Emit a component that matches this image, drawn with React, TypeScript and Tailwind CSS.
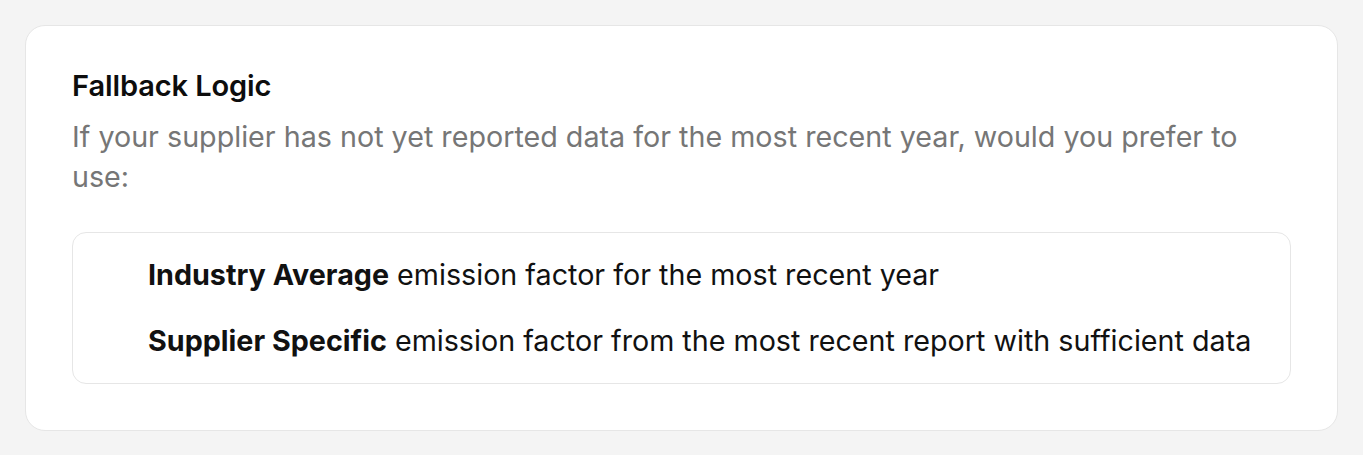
import React from "react";

const options = [
  { id: "industry", label: "Industry Average", rest: "emission factor for the most recent year" },
  { id: "supplier", label: "Supplier Specific", rest: "emission factor from the most recent report with sufficient data" },
];

const FallbackLogic = () => {
  return (
    <div className="rounded-[20px] border border-[#e6e6e6] bg-white px-[46px] pt-[42px] pb-[46px]">
      <h2 className="text-[29px] font-semibold leading-[36px] tracking-[-0.1px] text-[#0d0d0d]">Fallback Logic</h2>
      <p className="mt-[13px] pr-[40px] text-[28.7px] leading-[40px] text-[#767676]">
        If your supplier has not yet reported data for the most recent year, would you prefer to use:
      </p>

      {/* Option list */}
      <div className="mt-[35px] flex flex-col gap-[26px] rounded-[14px] border border-[#e6e6e6] py-[22px] pl-[75px] pr-6">
        {options.map((opt) => (
          <label key={opt.id} className="flex h-[40px] items-center text-[28.7px] text-[#111111]">
            <span>
              <span className="font-bold">{opt.label}</span> {opt.rest}
            </span>
          </label>
        ))}
      </div>
    </div>
  );
};

export default function App() {
  return (
    <div
      className="min-h-[455px] bg-[#f4f4f4] p-[25px]"
      style={{ fontFamily: "Inter, 'Noto Sans', sans-serif" }}
    >
      <FallbackLogic />
    </div>
  );
}
